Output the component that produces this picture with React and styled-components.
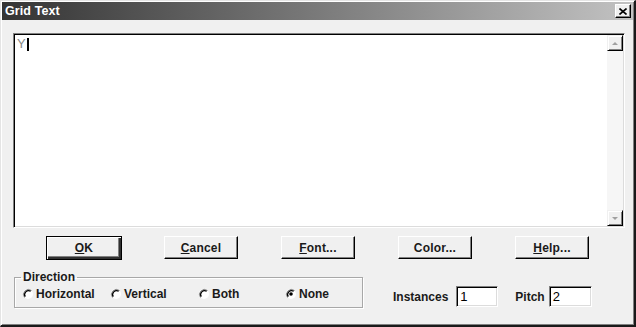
import React from "react";
import styled, { createGlobalStyle } from "styled-components";

const Global = createGlobalStyle`
  html, body {
    margin: 0;
    padding: 0;
    background: #f0f0f0;
  }
  * {
    box-sizing: border-box;
  }
`;

const Window = styled.div`
  width: 636px;
  height: 327px;
  background: #f0f0f0;
  border-style: solid;
  border-width: 1px 2px 2px 1px;
  border-color: #e4e4e4 #1a1a1a #1a1a1a #e4e4e4;
  box-shadow: inset 1px 1px 0 #fff, inset -1px -1px 0 #808080;
  font-family: "Liberation Sans", Arial, sans-serif;
  display: flex;
  flex-direction: column;
`;

const TitleBar = styled.div`
  height: 18px;
  margin: 1px 0 0 1px;
  width: 631px;
  background: linear-gradient(90deg, #343434 0%, #7a7a7a 50%, #c2c2c2 100%);
  display: flex;
  align-items: center;
  justify-content: space-between;
  padding: 0 2px 0 3px;
`;

const Title = styled.span`
  color: #fff;
  font-weight: bold;
  font-size: 12.5px;
  letter-spacing: 0.1px;
`;

const CloseBtn = styled.div`
  width: 16px;
  height: 14px;
  background: #f0f0f0;
  border: 1px solid;
  border-color: #fff #000 #000 #fff;
  box-shadow: inset -1px -1px 0 #808080;
  display: flex;
  align-items: center;
  justify-content: center;
`;

const Content = styled.div`
  display: flex;
  flex-direction: column;
  padding: 13px 9px 0 12px;
`;

const TextArea = styled.div`
  width: 612px;
  height: 195px;
  background: #fff;
  border: 1px solid;
  border-color: #808080 #fff #fff #808080;
  box-shadow: inset 1px 1px 0 #000, inset -1px -1px 0 #dcdcdc;
  display: flex;
  padding: 1px;
`;

const Editor = styled.div`
  flex: 1;
  padding: 2px 2px;
  font-size: 13px;
  line-height: 14px;
  color: #8a8a8a;
  display: flex;
  align-items: flex-start;
`;

const Caret = styled.span`
  display: inline-block;
  width: 2px;
  height: 13px;
  background: #000;
  margin: 1px 0 0 1px;
`;

const ScrollBar = styled.div`
  width: 16px;
  display: flex;
  flex-direction: column;
  justify-content: space-between;
  background: #f6f6f6;
`;

const ScrollBtn = styled.div`
  width: 16px;
  height: 16px;
  background: #f0f0f0;
  border: 1px solid;
  border-color: #f0f0f0 #000 #000 #f0f0f0;
  box-shadow: inset 1px 1px 0 #fff, inset -1px -1px 0 #808080;
  display: flex;
  align-items: center;
  justify-content: center;
`;

const ButtonRow = styled.div`
  display: flex;
  gap: 43px;
  margin-top: 8px;
  padding-left: 34px;
`;

const Button = styled.div`
  width: ${(p) => (p.$default ? "76px" : "74px")};
  height: ${(p) => (p.$default ? "24px" : "23px")};
  margin: ${(p) => (p.$default ? "0 -1px" : "0")};
  background: #f0f0f0;
  border: 1px solid;
  border-color: ${(p) => (p.$default ? "#000" : "#fff #000 #000 #fff")};
  box-shadow: ${(p) =>
    p.$default
      ? "inset 1px 1px 0 #fff, inset -2px -2px 0 #303030, inset -3px -3px 0 #808080"
      : "inset -1px -1px 0 #808080"};
  display: flex;
  align-items: center;
  justify-content: center;
  font-weight: bold;
  font-size: 12px;
  color: #1a1a1a;
  letter-spacing: 0.2px;
  u {
    text-decoration-thickness: 1px;
    text-underline-offset: 1px;
  }
`;

const BottomRow = styled.div`
  display: flex;
  align-items: flex-start;
  margin-top: 10px;
`;

const Group = styled.fieldset`
  margin: 0 0 0 1px;
  width: 349px;
  height: 38px;
  padding: 0 0 0 6px;
  border: 1px solid #a8a8a8;
  box-shadow: 1px 1px 0 #fff, inset 1px 1px 0 #fff;
`;

const Legend = styled.legend`
  padding: 0 2px;
  font-size: 12px;
  line-height: 14px;
  font-weight: bold;
  color: #1a1a1a;
`;

const RadioRow = styled.div`
  display: flex;
  margin-top: 3px;
  margin-left: 1px;
`;

const RadioItem = styled.div`
  width: ${(p) => p.$w}px;
  display: flex;
  align-items: center;
  gap: 2px;
  font-size: 12px;
  font-weight: bold;
  color: #1a1a1a;
  height: 14px;
`;

const Field = styled.div`
  display: flex;
  align-items: center;
  margin-top: 16px;
  margin-left: ${(p) => p.$ml}px;
  gap: ${(p) => p.$gap}px;
`;

const Label = styled.span`
  font-size: 12px;
  font-weight: bold;
  color: #1a1a1a;
`;

const Input = styled.div`
  width: ${(p) => p.$w}px;
  height: 21px;
  background: #fff;
  border: 1px solid;
  border-color: #808080 #fff #fff #808080;
  box-shadow: inset 1px 1px 0 #000, inset -1px -1px 0 #dcdcdc;
  font-size: 13px;
  color: #000;
  padding: 2px 0 0 3px;
  line-height: 15px;
`;

const Radio = ({ checked }) => (
  <svg width="12" height="12" viewBox="0 0 12 12">
    <circle cx="6" cy="6" r="5" fill="#fff" />
    <path d="M2.5 9.5 A5 5 0 0 1 9.5 2.5" stroke="#808080" strokeWidth="1" fill="none" />
    <path d="M3.3 8.7 A3.9 3.9 0 0 1 8.7 3.3" stroke="#000" strokeWidth="1.2" fill="none" />
    {checked && <circle cx="6" cy="6" r="1.8" fill="#000" />}
  </svg>
);

const Arrow = ({ down }) => (
  <svg width="8" height="5" viewBox="0 0 8 5">
    <path d={down ? "M1 1 L7 1 L4 4 Z" : "M1 4 L7 4 L4 1 Z"} fill="#a0a0a0" />
  </svg>
);

const Mn = ({ text }) => (
  <span>
    <u>{text[0]}</u>
    {text.slice(1)}
  </span>
);

export default function App() {
  return (
    <>
      <Global />
      <Window>
        <TitleBar>
          <Title>Grid Text</Title>
          <CloseBtn>
            <svg width="8" height="7" viewBox="0 0 8 7">
              <path d="M0.5 0.5 L7.5 6.5 M7.5 0.5 L0.5 6.5" stroke="#000" strokeWidth="1.6" />
            </svg>
          </CloseBtn>
        </TitleBar>
        <Content>
          <TextArea>
            <Editor>
              Y<Caret />
            </Editor>
            <ScrollBar>
              <ScrollBtn>
                <Arrow />
              </ScrollBtn>
              <ScrollBtn>
                <Arrow down />
              </ScrollBtn>
            </ScrollBar>
          </TextArea>
          <ButtonRow>
            <Button $default>
              <Mn text="OK" />
            </Button>
            <Button>
              <Mn text="Cancel" />
            </Button>
            <Button>
              <Mn text="Font..." />
            </Button>
            <Button>Color...</Button>
            <Button>
              <Mn text="Help..." />
            </Button>
          </ButtonRow>
          <BottomRow>
            <Group>
              <Legend>Direction</Legend>
              <RadioRow>
                <RadioItem $w={88}>
                  <Radio />
                  Horizontal
                </RadioItem>
                <RadioItem $w={88}>
                  <Radio />
                  Vertical
                </RadioItem>
                <RadioItem $w={87}>
                  <Radio />
                  Both
                </RadioItem>
                <RadioItem $w={70}>
                  <Radio checked />
                  None
                </RadioItem>
              </RadioRow>
            </Group>
            <Field $ml={30} $gap={8}>
              <Label>Instances</Label>
              <Input $w={42}>1</Input>
            </Field>
            <Field $ml={17} $gap={4}>
              <Label>Pitch</Label>
              <Input $w={43}>2</Input>
            </Field>
          </BottomRow>
        </Content>
      </Window>
    </>
  );
}
